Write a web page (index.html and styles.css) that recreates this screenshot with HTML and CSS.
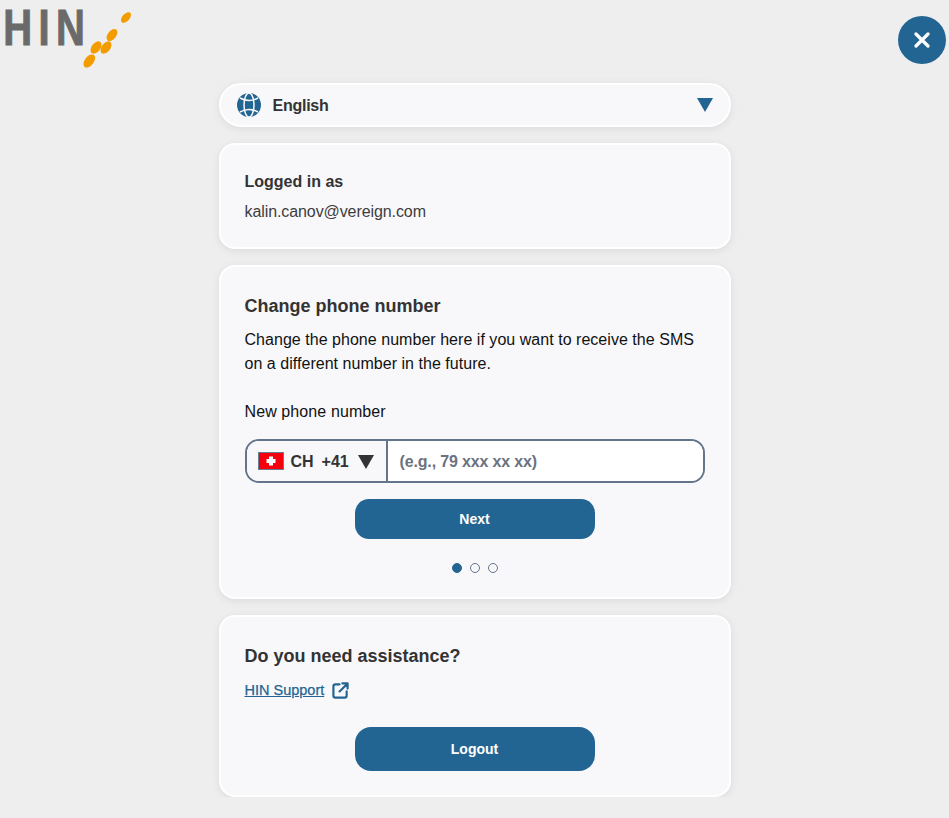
FILE: index.html
```html
<!DOCTYPE html>
<html lang="en">
<head>
    <meta charset="UTF-8">
    <meta name="viewport" content="width=device-width, initial-scale=1.0">
    <title>HIN Account</title>
    <link rel="stylesheet" href="styles.css">
</head>
<body>
    <header class="topbar">
        <div class="logo">
            <span class="logo-text">HIN</span>
            <svg class="logo-dots" width="60" height="60" viewBox="0 0 60 60">
                <g fill="#f39c00">
                    <ellipse cx="43" cy="5.500" rx="6.300" ry="3.600" transform="rotate(-48 43 5.500)"/>
                    <ellipse cx="29" cy="23" rx="7" ry="4.200" transform="rotate(-52 29 23)"/>
                    <ellipse cx="13" cy="35.500" rx="7" ry="4.300" transform="rotate(-52 13 35.500)"/>
                    <ellipse cx="23" cy="35.500" rx="7" ry="4.300" transform="rotate(-52 23 35.500)"/>
                    <ellipse cx="6.300" cy="49" rx="7.500" ry="4.500" transform="rotate(-52 6.300 49)"/>
                </g>
            </svg>
        </div>
        <button class="close-btn" aria-label="Close">
            <svg width="16" height="16" viewBox="0 0 16 16">
                <path d="M2 2 L14 14 M14 2 L2 14" stroke="#fff" stroke-width="3.200" stroke-linecap="round"/>
            </svg>
        </button>
    </header>

    <main class="column">
        <div class="lang-select">
            <svg class="globe" width="24" height="24" viewBox="0 0 24 24">
                <circle cx="12" cy="12" r="12" fill="#236592"/>
                <g fill="none" stroke="#f8f8fb" stroke-width="1.500">
                    <ellipse cx="12" cy="12" rx="5" ry="12"/>
                    <path d="M3 5 Q12 10 21 5 M3 19 Q12 14 21 19"/>
                </g>
            </svg>
            <span class="lang-label">English</span>
            <span class="caret caret-blue"></span>
        </div>

        <section class="card card-login">
            <h4 class="small-title">Logged in as</h4>
            <p class="email">kalin.canov@vereign.com</p>
        </section>

        <section class="card card-phone">
            <h3 class="title">Change phone number</h3>
            <p class="text">Change the phone number here if you want to receive the SMS on a different number in the future.</p>
            <label class="field-label">New phone number</label>
            <div class="phone-input">
                <div class="country">
                    <svg class="flag" width="26" height="18" viewBox="0 0 26 18">
                        <rect x="0.500" y="0.500" width="25" height="17" fill="#f5000f" stroke="#6b7a8c"/>
                        <path d="M11 4.500 H15 V7 H17.500 V11 H15 V13.500 H11 V11 H8.500 V7 H11 Z" fill="#fff"/>
                    </svg>
                    <span class="code">CH</span>
                    <span class="prefix">+41</span>
                    <span class="caret caret-dark"></span>
                </div>
                <input class="number" type="text" placeholder="(e.g., 79 xxx xx xx)">
            </div>
            <button class="btn btn-next">Next</button>
            <div class="steps">
                <span class="dot active"></span>
                <span class="dot"></span>
                <span class="dot"></span>
            </div>
        </section>

        <section class="card card-help">
            <h3 class="title">Do you need assistance?</h3>
            <div class="support">
                <a href="#">HIN Support</a>
                <svg width="17" height="17" viewBox="0 0 18 18" fill="none" stroke="#236592" stroke-width="2.300" stroke-linecap="round" stroke-linejoin="round">
                    <path d="M8 2.500 H3.500 Q1.500 2.500 1.500 4.500 V14.500 Q1.500 16.500 3.500 16.500 H13.500 Q15.500 16.500 15.500 14.500 V10"/>
                    <path d="M11 1.500 H16.500 V7 M16.500 1.500 L8 10"/>
                </svg>
            </div>
            <button class="btn btn-logout">Logout</button>
        </section>
    </main>
</body>
</html>
```

FILE: styles.css
```css
body {
    margin: 0;
    background-color: #eeeeee;
    font-family: "Liberation Sans", Arial, sans-serif;
    color: #333;
}
.topbar {
    display: flex;
    justify-content: space-between;
    align-items: flex-start;
    height: 83px;
    padding-right: 3px;
}
.logo {
    position: relative;
    width: 140px;
    height: 70px;
}
.logo-text {
    display: block;
    padding: 2px 0 0 4px;
    font-weight: bold;
    font-size: 50px;
    line-height: 52px;
    letter-spacing: 8px;
    color: #6a6a6a;
    -webkit-text-stroke: 1px #6a6a6a;
    transform: scaleX(0.8);
    transform-origin: left top;
}
.logo-dots {
    position: absolute;
    left: 83px;
    top: 12px;
}
.close-btn {
    display: flex;
    align-items: center;
    justify-content: center;
    width: 48px;
    height: 48px;
    margin-top: 16px;
    padding: 0;
    border: none;
    border-radius: 50%;
    background: #236592;
}
.column {
    display: flex;
    flex-direction: column;
    gap: 16px;
    width: 512px;
    margin: 0 auto;
}
.lang-select {
    display: flex;
    align-items: center;
    box-sizing: border-box;
    height: 44px;
    padding: 0 16px;
    background: #f8f8fb;
    border: 2px solid #fff;
    border-radius: 22px;
    box-shadow: 0 2px 8px rgba(0, 0, 0, 0.08);
}
.globe {
    margin-right: 12px;
}
.lang-label {
    flex: 1;
    padding-top: 1px;
    font-size: 16px;
    font-weight: bold;
    letter-spacing: -0.25px;
}
.caret {
    width: 0;
    height: 0;
    border-style: solid;
    border-color: transparent;
}
.caret-blue {
    border-width: 14px 8px 0;
    border-top-color: #236592;
}
.caret-dark {
    border-width: 14px 8.5px 0;
    border-top-color: #333;
}
.card {
    box-sizing: border-box;
    padding: 0 24px;
    background: #f8f8fb;
    border: 2px solid #fff;
    border-radius: 16px;
    box-shadow: 0 2px 8px rgba(0, 0, 0, 0.08);
}
.card-login {
    height: 106px;
    padding-top: 27px;
}
.small-title {
    margin: 0;
    font-size: 16px;
    line-height: 20px;
    font-weight: bold;
}
.email {
    margin: 10px 0 0;
    font-size: 16px;
    line-height: 20px;
    letter-spacing: -0.09px;
    color: #3d3d3d;
}
.card-phone {
    height: 334px;
    padding-top: 27px;
}
.title {
    margin: 0;
    font-size: 18px;
    line-height: 24px;
    font-weight: bold;
}
.text {
    margin: 10px 0 0;
    font-size: 16px;
    line-height: 24px;
    letter-spacing: 0.035px;
    color: #111;
}
.field-label {
    display: block;
    margin-top: 24px;
    font-size: 16px;
    line-height: 24px;
    letter-spacing: 0.1px;
    color: #111;
}
.phone-input {
    display: flex;
    box-sizing: border-box;
    height: 44px;
    margin-top: 15px;
    background: #fff;
    border: 2px solid #64748b;
    border-radius: 14px;
    overflow: hidden;
}
.country {
    display: flex;
    align-items: center;
    width: 141px;
    box-sizing: border-box;
    padding-left: 11px;
    padding-top: 1px;
    background: #f8f8fb;
    border-right: 2px solid #64748b;
    box-shadow: 0 2px 8px rgba(0, 0, 0, 0.1);
    font-size: 16px;
    font-weight: bold;
}
.flag {
    margin-right: 7px;
    margin-top: -1px;
}
.code {
    margin-right: 8px;
}
.prefix {
    margin-right: 9px;
}
.number {
    flex: 1;
    min-width: 0;
    padding: 2px 12px 0;
    border: none;
    outline: none;
    background: #fff;
    font-family: inherit;
    font-size: 16px;
    font-weight: bold;
    letter-spacing: -0.15px;
}
.number::placeholder {
    color: #6b7280;
    opacity: 1;
}
.btn {
    display: block;
    width: 240px;
    margin: 0 auto;
    border: none;
    background: #236592;
    color: #fff;
    font-family: inherit;
    font-size: 14px;
    font-weight: bold;
}
.btn-next {
    height: 40px;
    margin-top: 16px;
    border-radius: 14px;
}
.steps {
    display: flex;
    justify-content: center;
    gap: 8px;
    margin-top: 24px;
}
.dot {
    box-sizing: border-box;
    width: 10px;
    height: 10px;
    border: 1px solid #64748b;
    border-radius: 50%;
}
.dot.active {
    background: #236592;
    border-color: #236592;
}
.card-help {
    height: 182px;
    padding-top: 27px;
}
.support {
    display: flex;
    align-items: center;
    gap: 8px;
    margin-top: 10px;
    height: 24px;
}
.support a {
    color: #236592;
    font-size: 14.5px;
    -webkit-text-stroke: 0.25px #236592;
}
.btn-logout {
    height: 44px;
    margin-top: 25px;
    border-radius: 16px;
}
```
